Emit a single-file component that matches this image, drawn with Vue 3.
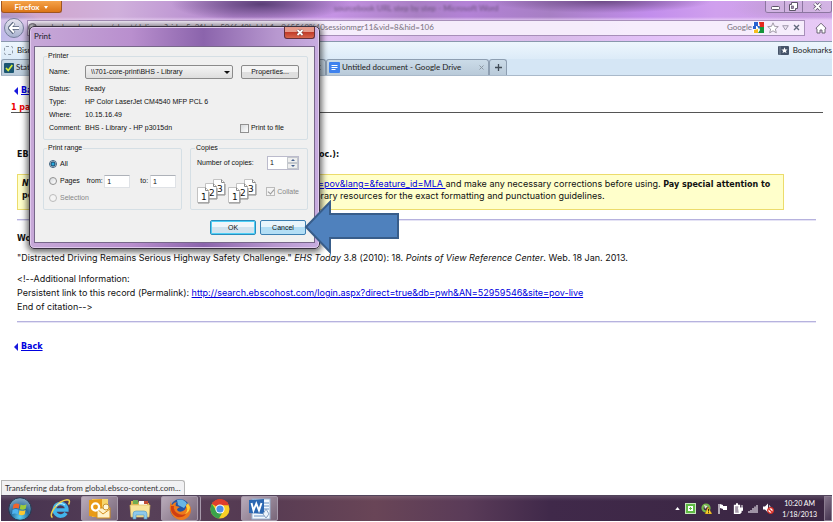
<script setup>
import { ref } from 'vue'

const url = ref('web.ebscohost.com/ehost/delivery?sid=c5a31bde-506f-49bd-bb1c-065569%40sessionmgr11&vid=8&hid=106')
const printer = ref('\\\\701-core-print\\BHS - Library')
const range = ref('all')
const from = ref('1')
const to = ref('1')
const copies = ref('1')
const toFile = ref(false)
const details = [
  ['Status:', 'Ready'],
  ['Type:', 'HP Color LaserJet CM4540 MFP PCL 6'],
  ['Where:', '10.15.16.49'],
  ['Comment:', 'BHS - Library - HP p3015dn'],
]
</script>

<template>
  <div class="desktop">
    <header class="chrome">
      <div class="titlebar">
        <button class="firefox">Firefox <i class="caret"></i></button>
        <span class="ghost-title">sourcebook URL step by step - Microsoft Word</span>
        <div class="winbtns">
          <button aria-label="Minimize"><svg width="9" height="9" viewBox="0 0 9 9"><rect x=".5" y="4.500" width="8" height="3" rx="1" fill="#fff" stroke="#5d5468" /></svg></button>
          <button aria-label="Restore"><svg width="9" height="9" viewBox="0 0 9 9"><path d="M2.500.5h6v6h-2v2h-6v-6h2z" fill="#fff" stroke="#5d5468" /><rect x="2.500" y="4" width="2" height="2.500" fill="#a78bb9" stroke="#5d5468" stroke-width=".7" /></svg></button>
          <button class="wide" aria-label="Close"><svg width="9" height="9" viewBox="0 0 9 9"><path d="M1.500 1.500l6 6m0-6l-6 6" stroke="#5d5468" stroke-width="3.400" /><path d="M1.500 1.500l6 6m0-6l-6 6" stroke="#fff" stroke-width="1.800" /></svg></button>
        </div>
      </div>
      <div class="navbar">
        <button class="back" aria-label="Go back"><svg width="12" height="12" viewBox="0 0 12 12"><path d="M6 1L1.500 6 6 11M2 6h9" fill="none" stroke="#55627a" stroke-width="3.600" /><path d="M6 1.500L1.800 6 6 10.500M2 6h9" fill="none" stroke="#fff" stroke-width="1.900" /></svg></button>
        <div class="address">
          <svg width="9" height="9" viewBox="0 0 9 9"><circle cx="4.500" cy="4.500" r="4" fill="#b9b4bd" stroke="#77717d" /><path d="M2 3l2-1 2 1-1 2-2 0z" fill="#eee" /></svg>
          <input v-model="url" class="url" aria-label="Address" />
          <span class="engine">Google</span>
          <svg class="g" width="11" height="11" viewBox="0 0 11 11"><rect width="11" height="11" rx="1" fill="#fff" /><path d="M1 0h4v4H1z" fill="#2a62d0" /><path d="M0 4h3v3H0z" fill="#2a62d0" /><path d="M6 0h5v5H7z" fill="#e4261c" /><path d="M6 5h5v6H5l2-3z" fill="#15953c" /><path d="M1 8l4-1v4H1z" fill="#f7bd20" /><path d="M4 4l3 0-1 3z" fill="#2a62d0" /></svg>
          <svg width="12" height="12" viewBox="0 0 12 12"><path d="M6 .8l1.500 3.500 3.800.3-2.900 2.500.9 3.700L6 8.800l-3.300 2 .9-3.700L.7 4.600l3.800-.3z" fill="#fff" stroke="#99919f" stroke-width=".9" /></svg>
          <svg width="7" height="6" viewBox="0 0 7 6"><path d="M.7.7h5.600L3.500 5z" fill="#eee6f3" stroke="#8d879c" stroke-width=".8" /></svg>
          <svg class="stop" width="7" height="7" viewBox="0 0 7 7"><path d="M1 1l5 5m0-5L1 6" stroke="#626a7c" stroke-width="1.400" /></svg>
        </div>
        <button class="home" aria-label="Home"><svg width="12" height="12" viewBox="0 0 12 12"><path d="M1 6.200L6 1.200l5 5-1 .8V11H7V8H5v3H2V7z" fill="#fff" stroke="#5f5a68" stroke-width=".9" /></svg></button>
      </div>
      <div class="bookmarks">
        <a href="#"><i class="dotted"></i>Bisr</a>
        <a href="#" class="bm-menu"><svg width="11" height="9" viewBox="0 0 11 9"><rect width="11" height="9" rx="1" fill="#465469" /><path d="M2 0v9" stroke="#7d8a9c" /><path d="M6.500 1.300l.9 2.100 2.200.1-1.700 1.400.6 2.200-2-1.200-2 1.200.6-2.200-1.700-1.400 2.200-.1z" fill="#fff" /></svg>Bookmarks</a>
      </div>
      <nav class="tabs">
        <a href="#" class="tab first"><svg width="10" height="10" viewBox="0 0 10 10"><rect width="10" height="10" rx="1" fill="#1b5672" /><path d="M2 5l2.200 2.500L8.300 2" fill="none" stroke="#d5ef3b" stroke-width="1.700" /></svg><span>Stat</span><svg class="x" width="5" height="5" viewBox="0 0 5 5"><path d="M.5.500l4 4m0-4l-4 4" stroke="#59636d" /></svg></a>
        <a href="#" class="tab"><svg width="11" height="11" viewBox="0 0 11 11"><rect width="11" height="11" rx="1" fill="#3f82ee" /><path d="M2.500 3.500h6M2.500 5.500h6M2.500 7.500h4" stroke="#fff" /></svg><span>Untitled document - Google Drive</span><svg class="x" width="5" height="5" viewBox="0 0 5 5"><path d="M.5.500l4 4m0-4l-4 4" stroke="#8b96a1" /></svg></a>
        <button class="plus" aria-label="New tab"><svg width="7" height="7" viewBox="0 0 7 7"><path d="M3.500 0v7M0 3.500h7" stroke="#414b56" stroke-width="1.300" /></svg></button>
      </nav>
    </header>

    <main class="page">
      <a href="#" class="backlink"><i></i><b>Back</b></a>
      <div class="count">1 page</div>
      <article>
        <h2 class="split"><span>EB</span><span>oc.):</span></h2>
        <div class="note">
          <p class="split"><b class="lead"><em>No</em></b><span><a href="#">t=pov&amp;lang=&amp;feature_id=MLA </a> and make any necessary corrections before using. <b>Pay special attention to</b></span></p>
          <p class="split"><b>pe</b><span>brary resources for the exact formatting and punctuation guidelines.</span></p>
        </div>
        <hr />
        <h2 class="works">Wo</h2>
        <p class="cite">"Distracted Driving Remains Serious Highway Safety Challenge." <em>EHS Today</em> 3.8 (2010): 18. <em>Points of View Reference Center</em>. Web. 18 Jan. 2013.</p>
        <p class="info">&lt;!--Additional Information:<br />Persistent link to this record (Permalink): <a href="#">http://search.ebscohost.com/login.aspx?direct=true&amp;db=pwh&amp;AN=52959546&amp;site=pov-live</a><br />End of citation--&gt;</p>
        <hr />
      </article>
      <a href="#" class="backlink"><i></i><b>Back</b></a>
      <div class="status">Transferring data from global.ebsco-content.com...</div>
    </main>

    <footer class="taskbar">
      <button class="task orb" aria-label="Start"><svg width="24" height="24" viewBox="0 0 24 24"><defs><radialGradient id="orb" cx=".5" cy=".85" r=".8"><stop offset="0" stop-color="#5fd3f5" /><stop offset=".5" stop-color="#256a9f" /><stop offset="1" stop-color="#7ea5bf" /></radialGradient></defs><circle cx="12" cy="12" r="11.300" fill="url(#orb)" stroke="#23384f" /><path d="M5.500 7.500q3-2 6-.3l-.8 4.500q-3-1.500-6 .2z" fill="#f0642b" /><path d="M12.600 7.600q3 1.300 6-.4l-.9 4.600q-3 1.600-6 .2z" fill="#9ccb3c" /><path d="M4.500 13q3-1.700 6-.2l-.8 4.400q-3-1.500-5.600 0z" fill="#4fb4ee" /><path d="M11.500 13.200q3 1.400 6-.2l-.8 4.300q-3 1.700-6 .2z" fill="#fbc832" /></svg></button>
      <button class="task" aria-label="Internet Explorer"><svg width="22" height="22" viewBox="0 0 22 22"><path d="M17 15a6.300 6.300 0 1 1 .8-4.200v1.200H7" fill="none" stroke="#42b5ec" stroke-width="3.600" /><path d="M3.500 19.500C-1 17 8 3 18 1.800c3.500 0 2.500 3 1.500 4.700" fill="none" stroke="#f1d04a" stroke-width="1.500" /><path d="M7 8q4-4.500 9-1" fill="none" stroke="#c5efff" /></svg></button>
      <button class="task on" aria-label="Outlook"><svg width="24" height="22" viewBox="0 0 24 22"><path d="M4 1h16v18H4z" fill="#f8d66b" /><path d="M1 2l13-1v19L1 18z" fill="#e99a16" /><rect x="9" y="10" width="13" height="10" fill="#fff2c8" stroke="#d48d1b" /><path d="M9 11l6 5 7-5" fill="none" stroke="#d48d1b" /><circle cx="7.500" cy="9" r="3.600" fill="none" stroke="#fff" stroke-width="2.300" /><circle cx="18" cy="9" r="3" fill="#fff7dc" stroke="#c99530" /></svg></button>
      <button class="task" aria-label="Explorer"><svg width="24" height="22" viewBox="0 0 24 22"><path d="M3 3h7l1 2h10v14H3z" fill="#e2b850" /><path d="M5 2h5v4H5z" fill="#70ad52" /><path d="M11 3h8v4h-8z" fill="#fff" /><path d="M16 3h4v3h-4z" fill="#c24e36" /><path d="M2 7h20l-1 12H3z" fill="#f9e59b" stroke="#d9b961" stroke-width=".7" /><path d="M5 21v-5q0-3 3-3h8q3 0 3 3v5h-3v-4H8v4z" fill="#8ec9eb" stroke="#4f93be" stroke-width=".6" /></svg></button>
      <button class="task on stack" aria-label="Firefox"><svg width="24" height="24" viewBox="0 0 24 24"><circle cx="12" cy="12" r="10" fill="#2455a4" /><path d="M9 3q7-2 10 4l-3 4-6-3z" fill="#68b6e5" /><path d="M3 4q0 3 1 4 2-3 5-3-2 2-1 4l4 1q-3 1-3 3 2 3 6 1 4-2 3-7 3 2 3 6 1-2 0-6 4 6 0 12-5 6-12 3Q-1 17 3 4z" fill="#ed7a1c" /><path d="M3 9q-1 8 6 11 6 1 9-3-5 2-9-1-4-3-3-7z" fill="#cf3e12" /><path d="M18 9q3 4-1 8 5-2 5-7l-2-4z" fill="#ffd13c" /></svg></button>
      <button class="task" aria-label="Chrome"><svg width="20" height="20" viewBox="0 0 20 20"><circle cx="10" cy="10" r="9.500" fill="#f8cf25" /><path d="M10 10L2 4.800A9.500 9.500 0 0 1 18.800 6H10z" fill="#df3e2d" /><path d="M10 10l-3.500 2L2 4.800A9.500 9.500 0 0 0 9 19.500l4-7z" fill="#3ba14b" /><path d="M1.800 5A9.500 9.500 0 0 1 18.800 6.200H9z" fill="#df3e2d" /><circle cx="10" cy="10" r="4.600" fill="#fff" /><circle cx="10" cy="10" r="3.600" fill="#4b8de8" /></svg></button>
      <button class="task on" aria-label="Word"><svg width="22" height="22" viewBox="0 0 22 22"><rect x="3" y="1" width="18" height="20" fill="#f3f8fd" stroke="#9cb5d3" /><path d="M15 5h5M15 8h5M15 11h5M5 18h14" stroke="#6a93c5" /><path d="M0 2l15-1v15L0 15z" fill="#2b67b2" /><path d="M2.500 5l2 7.500L7.300 5.500l2.700 7L12.500 5" fill="none" stroke="#fff" stroke-width="1.900" /><path d="M17 11l3 5-3 4-3-4z" fill="#edf3fa" stroke="#8da5c3" /></svg></button>
      <div class="tray">
        <svg width="5" height="3" viewBox="0 0 6 4"><path d="M3 0l3 4H0z" fill="#fff" /></svg>
        <svg width="11" height="11" viewBox="0 0 11 11"><rect x=".5" y=".5" width="10" height="10" fill="#5fb944" stroke="#c8e5bd" /><rect x="3" y="3" width="5" height="5" fill="#fff" /><path d="M5.500 4v3M4 5.500h3" stroke="#5fb944" /></svg>
        <svg width="11" height="11" viewBox="0 0 11 11"><circle cx="5" cy="5" r="3.500" fill="none" stroke="#72b94a" stroke-width="2.200" /><path d="M3 2l4 1-3 3" fill="#e1f0ce" /><path d="M7 4l4 7H4z" fill="#ffd12d" stroke="#a87512" stroke-width=".5" /><path d="M7.500 6v2.500m0 .7v1" stroke="#382a10" /></svg>
        <svg width="11" height="11" viewBox="0 0 11 11"><path d="M2 1v10" stroke="#fff" stroke-width="1.200" /><path d="M3 1l3 1v1l4 0v4H6V6L3 5z" fill="#fff" /></svg>
        <svg width="10" height="11" viewBox="0 0 10 11"><path d="M1.500 2.500h5v8h-5zM3 1h2" fill="#a79cac" stroke="#fff" stroke-width="1.300" /><path d="M6 2v3m3-3v3M5 5h5v2L8 8v2H6" fill="#fff" stroke="#fff" /></svg>
        <svg width="10" height="9" viewBox="0 0 10 9"><path d="M1 9V7m2 2V6m2 3V4m2 5V2.500M9 9V1" stroke="#e3dde7" stroke-width="1.200" /></svg>
        <svg width="11" height="11" viewBox="0 0 11 11"><path d="M0 3.500h2L5 .5v9l-3-3H0z" fill="#fff" /><path d="M6.500 2.500q1 1.500 0 3" fill="none" stroke="#fff" /><circle cx="7.500" cy="7.500" r="2.800" fill="#fff" stroke="#d82e25" stroke-width="1.300" /><path d="M5.500 5.500l4 4" stroke="#d82e25" stroke-width="1.200" /></svg>
      </div>
      <div class="clock"><span>10:20 AM</span><span>1/18/2013</span></div>
      <button class="peek" aria-label="Show desktop"></button>
    </footer>

    <form class="dialog" role="dialog" aria-labelledby="dlg-title" @submit.prevent>
      <div class="dlg-head">
        <span id="dlg-title">Print</span>
        <button type="button" class="close" aria-label="Close dialog"><svg width="8" height="7" viewBox="0 0 8 7"><path d="M1.500 1l5 5m0-5l-5 5" stroke="#6e3434" stroke-width="3" /><path d="M1.500 1l5 5m0-5l-5 5" stroke="#fff" stroke-width="1.800" /></svg></button>
      </div>
      <div class="dlg-body">
        <fieldset class="printer">
          <legend>Printer</legend>
          <div class="row name">
            <label for="printer">Name:</label>
            <select id="printer" v-model="printer"><option>{{ printer }}</option></select>
            <button type="button" class="btn props">Properties...</button>
          </div>
          <div class="detail-wrap">
            <dl><template v-for="d in details" :key="d[0]"><dt>{{ d[0] }}</dt><dd>{{ d[1] }}</dd></template></dl>
            <label class="opt"><input v-model="toFile" type="checkbox" />Print to file</label>
          </div>
        </fieldset>
        <div class="two">
          <fieldset class="range">
            <legend>Print range</legend>
            <label class="opt"><input v-model="range" type="radio" value="all" />All</label>
            <div class="row">
              <label class="opt pages"><input v-model="range" type="radio" value="pages" />Pages</label>
              <label for="from" class="lfrom">from:</label><input id="from" v-model="from" class="num" />
              <label for="to" class="lto">to:</label><input id="to" v-model="to" class="num" />
            </div>
            <label class="opt off"><input v-model="range" type="radio" value="selection" disabled />Selection</label>
          </fieldset>
          <fieldset class="copies">
            <legend>Copies</legend>
            <div class="row between">
              <label for="copies">Number of copies:</label>
              <span class="spin"><input id="copies" v-model="copies" /><span class="arrows"><button type="button" aria-label="More"><i class="up"></i></button><button type="button" aria-label="Fewer"><i class="down"></i></button></span></span>
            </div>
            <div class="row between sheets">
              <svg width="61" height="25" viewBox="0 0 61 25">
                <g v-for="k in 2" :key="k" :transform="`translate(${(k - 1) * 31} 0)`">
                  <g v-for="n in [3, 2, 1]" :key="n" :transform="`translate(${(n - 1) * 8} ${(3 - n) * 4})`">
                    <path d="M.5.500h8l3 3v12H.5z" fill="#fff" stroke="#c3c3c3" /><path d="M8.500.500v3h3M1 16h11V5" fill="none" stroke="#8a8a8a" />
                    <text x="4" y="13" class="digit">{{ n }}</text>
                  </g>
                </g>
              </svg>
              <label class="opt off"><input type="checkbox" checked disabled />Collate</label>
            </div>
          </fieldset>
        </div>
        <div class="actions">
          <button type="submit" class="btn ok">OK</button>
          <button type="button" class="btn cancel">Cancel</button>
        </div>
      </div>
    </form>

    <svg class="arrow" width="96" height="54" viewBox="0 0 96 54"><path d="M2 27L26 2v12h68v24H26v14z" fill="#4f81bd" stroke="#385d8a" stroke-width="2" /></svg>
  </div>
</template>

<style>
body { background: #fff; }
</style>

<style scoped>
* { box-sizing: border-box; }
.desktop { position: relative; display: flex; flex-direction: column; min-height: 100vh; padding: 1px; overflow: hidden; font: 9px/11px Inter, "DejaVu Sans", sans-serif; font-variant-ligatures: none; color: #111; }
button, input, select { font: inherit; color: inherit; margin: 0; padding: 0; border: 0; background: none; }
svg { flex: none; display: block; }
a { color: #0000e0; }
p, h2, dl, dd { margin: 0; }

.chrome { font: 8px/11px Lato, "Open Sans", sans-serif; background:
  linear-gradient(#fff0 16px, #f6e0ffa0 19px),
  radial-gradient(ellipse 90px 17px at 260px 3px, #5b3f77 0%, transparent 100%),
  radial-gradient(ellipse 110px 12px at 600px 0, #6d4a86 0%, transparent 100%),
  radial-gradient(ellipse 60px 14px at 790px 6px, #bf9bd2 0%, transparent 100%),
  radial-gradient(ellipse 50px 30px at 0 36px, #5f78c4 0%, transparent 100%),
  linear-gradient(90deg, #d0a3c6 0, #d0b0dc 14%, #b184cc 28%, #c593e4 40%, #a97fc4 50%, #b382d6 56%, #a77fc4 66%, #c28dec 78%, #d0a0ee 86%, #cba2e3 100%); }
.titlebar { display: flex; align-items: flex-start; height: 17px; }
.firefox { width: 61px; height: 12px; border: 1px solid #9f5520; border-top: 0; border-radius: 0 0 3px 3px; background: linear-gradient(#f5a34a, #dc7516); color: #fff; font-weight: 700; line-height: 10px; }
.caret { display: inline-block; margin: 0 0 1px 3px; border: 2px solid transparent; border-top: 3px solid #fff; border-bottom: 0; }
.ghost-title { flex: 1; padding-left: 272px; color: #4d3b5a; filter: blur(1px); opacity: .7; line-height: 15px; }
.winbtns { display: flex; height: 12px; border: 1px solid #8c76a0; border-top: 0; border-radius: 0 0 3px 3px; }
.winbtns button { display: grid; place-items: center; width: 18px; background: #ffffff38; }
.winbtns button + button { border-left: 1px solid #8c76a0; }
.winbtns .wide { width: 29px; }
.navbar { display: flex; align-items: center; height: 23px; padding: 0 5px 4px 3px; gap: 3px; }
.back { display: grid; place-items: center; width: 20px; height: 20px; border: 1px solid #777f9d; border-radius: 50%; background: linear-gradient(#e6e4ef, #a9b3d0); }
.address { flex: 1; display: flex; align-items: center; gap: 3px; height: 16px; padding: 0 4px 0 0; border: 1px solid #a78fb9; background: #f7effcf0; color: #77717c; margin-right: 7px; }
.url { flex: 1; min-width: 0; padding-left: 1px; outline: 0; }
.engine { margin-right: -2px; }
.stop { margin-left: 1px; }
.home { display: grid; }
.bookmarks { display: flex; justify-content: space-between; align-items: center; height: 18px; padding: 0 0 0 3px; border-top: 1px solid #8997ad; background: linear-gradient(#edf6fd, #dcebf8); }
.bookmarks a { display: flex; align-items: center; gap: 4px; color: #222; text-decoration: none; }
.dotted { width: 9px; height: 9px; border: 1px dashed #8f9ba8; border-radius: 2px; }
.tabs { display: flex; height: 17px; border-bottom: 1px solid #a9b9ca; background: #d5e6f5; }
.tab, .plus { display: flex; align-items: center; gap: 2px; padding: 0 4px; border: 1px solid #8d9eb1; border-bottom: 0; border-radius: 3px 3px 0 0; background: linear-gradient(#cbdbe8, #b9cad9); color: #222; text-decoration: none; }
.tab { width: 163px; padding-left: 2px; }
.tab span { flex: 1; }
.first { width: 325px; }
.plus { width: 18px; padding: 0 5px; }

.page { position: relative; flex: 1; padding: 9px 9px 0 10px; background: #fff; }
.backlink { display: flex; align-items: center; gap: 3px; padding-left: 3px; width: max-content; }
.page b, .page h2, .count { font-family: "DejaVu Sans", sans-serif; font-size: 8px; }
.backlink i { border: 4px solid transparent; border-right-color: #1919dd; border-left: 0; }
.count { margin-top: 6px; height: 11px; border-bottom: 1px solid #555; color: #e00; font-weight: 700; }
article { padding: 36px 7px 0 6px; }
.split { display: grid; grid-template-columns: 302px 1fr; white-space: nowrap; }
.note { margin: 14px 32px 0 0; height: 36px; padding: 3px 4px; border: 1px solid #ecdc6c; background: #ffffcb; }
.note .split { grid-template-columns: 293px 1fr; }
hr { height: 2px; margin: 9px 0 0; border: 0; border-top: 1px solid #b6b2de; background: #e5e3f5; }
.works { margin-top: 12px; }
.cite { margin-top: 8px; }
.info { margin-top: 9px; line-height: 14px; }
.info + hr { margin: 7px 0 18px; }
.status { position: absolute; left: 0; bottom: 0; padding: 1px 3px; border: 1px solid #b5b5b5; border-bottom: 0; border-radius: 0 3px 0 0; background: #f1f1f3; font: 8px/12px Lato, "Open Sans", sans-serif; color: #333; }

.taskbar { display: flex; align-items: stretch; height: 26px; gap: 3px; border-top: 1px solid #51445b; background: linear-gradient(#ffffff24 0, transparent 20%), linear-gradient(90deg, #46324f 0, #574058 18%, #553a52 30%, #694557 45%, #5a3b58 56%, #40294a 66%, #3a2642 100%); color: #fff; font: 7px/11px Lato, "Open Sans", sans-serif; }
.task { display: grid; place-items: center; width: 37px; }
.on { border: 1px solid #a79aab; border-radius: 2px; background: linear-gradient(135deg, #b9abba, #786679); }
.stack { box-shadow: 2px 0 #5d4c62, 3px 0 #a79aab; }
.tray { display: flex; align-items: center; gap: 5px; margin-left: auto; margin-right: 5px; }
.clock { display: flex; flex-direction: column; justify-content: center; text-align: center; margin-right: 4px; }
.peek { width: 8px; border: 1px solid #8b7c90; background: linear-gradient(135deg, #84748a, #453450); }

.dialog { position: absolute; left: 29px; top: 26px; width: 291px; padding: 0 4px 5px; border: 1px solid #39313f; border-radius: 5px; background: linear-gradient(90deg, #c7a9d8, #b98fce 35%, #8b64ac 60%, #b797cf 85%, #c8ade0); box-shadow: inset 0 0 0 1px #e0cbed, 0 1px 6px 2px #0009; font: 7px/10px "Liberation Sans", sans-serif; }
.dlg-head { display: flex; justify-content: space-between; height: 19px; color: #201a28; font: 8px/18px Lato, "Open Sans", sans-serif; }
.close { display: grid; place-items: center; width: 31px; height: 12px; border: 1px solid #62303b; border-top: 0; border-radius: 0 0 3px 3px; background: linear-gradient(#e69a8b 0 45%, #c13c29 50%, #d8664e); }
.dlg-body { padding: 4px 6px 7px 8px; border: 1px solid #77678a; background: #f0f0f0; }
fieldset { min-width: 0; margin: 0; padding: 0 5px; border: 1px solid #d5dfe5; border-radius: 2px; }
legend { padding: 0 1px; margin-left: -2px; line-height: 10px; }
.row { display: flex; align-items: center; }
.between { justify-content: space-between; }
.printer { height: 89px; }
.name { position: relative; margin-top: 4px; }
.name label { width: 36px; }
select { width: 148px; height: 14px; padding: 0 5px; appearance: none; border: 1px solid #8b8b8b; border-radius: 2px; background: linear-gradient(#f4f4f4, #dedede); }
.name::after { content: ""; position: absolute; left: 175px; top: 6px; border: 3px solid transparent; border-top: 3px solid #111; border-bottom: 0; pointer-events: none; }
.btn { height: 14px; border: 1px solid #8b8b8b; border-radius: 2px; background: linear-gradient(#f5f5f5 0 50%, #dfdfdf 50%); }
.props { width: 58px; margin-left: 8px; }
.detail-wrap { display: flex; justify-content: space-between; align-items: flex-end; padding: 3px 18px 0 0; }
dl { display: grid; grid-template-columns: 36px auto; line-height: 13px; white-space: nowrap; }
.opt { display: flex; align-items: center; gap: 2px; height: 12px; white-space: nowrap; }
.opt input { appearance: none; width: 9px; height: 9px; border: 1px solid #919191; background: linear-gradient(135deg, #d6d9dc, #fff); }
.opt input[type=radio] { border-radius: 50%; width: 8px; height: 8px; margin-right: 1px; }
.opt input[type=radio]:checked { border-color: #3a5d7b; background: radial-gradient(circle, #2aaadd 0 1px, #123f65 2px, #e4edf3 3px); }
.opt.off { color: #888; }
.opt.off input { display: grid; place-items: center; border-color: #bbb; background: #f4f4f4; }
.off input[type=checkbox]:checked::after { content: ""; width: 3px; height: 5px; margin-bottom: 1px; border: solid #999; border-width: 0 1px 1px 0; transform: rotate(40deg); }
.two { display: grid; grid-template-columns: 139px 118px; justify-content: space-between; margin-top: 3px; }
.two fieldset { height: 67px; }
.range .opt { margin-top: 5px; }
.range > .row { margin: 5px 0; height: 12px; }
.range .pages { width: 39px; margin: 0; }
.lfrom { width: 18px; }
.lto { width: 10px; margin-left: 10px; }
.num { width: 26px; height: 13px; padding: 0 2px; border: 1px solid #dfe2e6; border-top-color: #aeb2b9; background: #fff; }
.copies { padding-right: 8px; padding-left: 6px; }
.copies > .row { margin-top: 3px; }
.spin { display: flex; width: 32px; height: 14px; border: 1px solid #bbc; background: #fff; }
.spin input { flex: 1; min-width: 0; padding-left: 2px; }
.arrows { display: grid; width: 11px; }
.arrows button { display: grid; place-items: center; border: 1px solid #c4c8cd; background: #eee; }
.up, .down { border: 2px solid transparent; border-bottom: 2px solid #45618f; border-top: 0; }
.down { border-bottom: 0; border-top: 2px solid #45618f; }
.copies > .sheets { margin-top: 9px; }
.digit { font: 9px "DejaVu Sans", sans-serif; fill: #111; }
.actions { display: flex; justify-content: flex-end; gap: 4px; margin-top: 10px; padding-right: 2px; }
.actions .btn { width: 46px; height: 15px; }
.ok { border: 1px solid #2a8dbd; box-shadow: inset 0 0 0 1px #4fd0f7; background: linear-gradient(#f0f6fa 0 50%, #d2e3ee 50%); }
.cancel { border-color: #3c7fb1; background: linear-gradient(#e8f5fc 0 50%, #b3def5 50%); }
.arrow { position: absolute; left: 304px; top: 200px; }
</style>
